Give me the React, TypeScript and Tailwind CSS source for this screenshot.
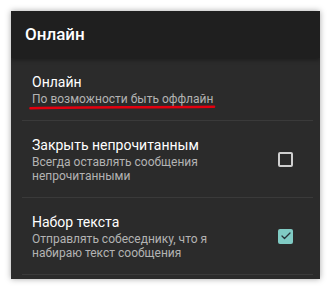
import { Check } from "lucide-react";

type Pref = {
  title: string;
  subtitle: string;
  checked?: boolean;
  underline?: boolean;
};

const prefs: Pref[] = [
  { title: "Онлайн", subtitle: "По возможности быть оффлайн", underline: true },
  {
    title: "Закрыть непрочитанным",
    subtitle: "Всегда оставлять сообщения непрочитанными",
    checked: false,
  },
  {
    title: "Набор текста",
    subtitle: "Отправлять собеседнику, что я набираю текст сообщения",
    checked: true,
  },
];

function Checkbox({ checked }: { checked: boolean }) {
  if (checked) {
    return (
      <div className="flex h-[15px] w-[15px] items-center justify-center rounded-[2px] bg-[#80cbc4]">
        <Check size={12} strokeWidth={2.5} className="text-[#263238]" />
      </div>
    );
  }
  return <div className="h-[15px] w-[15px] rounded-[2px] border-2 border-[#cfcfcf]" />;
}

function PrefRow({ pref }: { pref: Pref }) {
  return (
    <div className="flex flex-col">
      <div className="flex items-center py-[14px] pl-[21px] pr-[27px]">
        <div className="flex-1">
          <div className="text-[14px] leading-[20px] text-white">{pref.title}</div>
          <div className="relative max-w-[200px] text-[12px] leading-[14px] text-[#b3b3b3]">
            {pref.subtitle}
            {pref.underline && (
              <svg
                className="absolute left-[-3px] top-[13px]"
                width="190"
                height="5"
                viewBox="0 0 190 5"
              >
                <path
                  d="M1.5 3.2 Q 40 2.2 95 2.2 T 185 1.8"
                  stroke="#e3000f"
                  strokeWidth="2.6"
                  strokeLinecap="round"
                  fill="none"
                />
              </svg>
            )}
          </div>
        </div>
        {pref.checked !== undefined && <Checkbox checked={pref.checked} />}
      </div>
      <div className="ml-[11px] mr-[7px] h-px bg-[#3a3a3a]" />
    </div>
  );
}

export default function App() {
  return (
    <div
      className="h-[290px] w-[331px] bg-white p-[11px]"
      style={{ fontFamily: "Roboto, 'Noto Sans', sans-serif" }}
    >
      <div className="h-[268px] w-[309px] overflow-hidden bg-[#2b2b2b] shadow-[0_0_6px_rgba(0,0,0,0.35)]">
        <div className="relative z-10 flex h-[47px] items-center bg-[#1f1f1f] pl-[14px] shadow-[0_2px_4px_rgba(0,0,0,0.35)]">
          <span className="text-[17px] font-medium text-white">Онлайн</span>
        </div>
        {prefs.map((p) => (
          <PrefRow key={p.title} pref={p} />
        ))}
      </div>
    </div>
  );
}
